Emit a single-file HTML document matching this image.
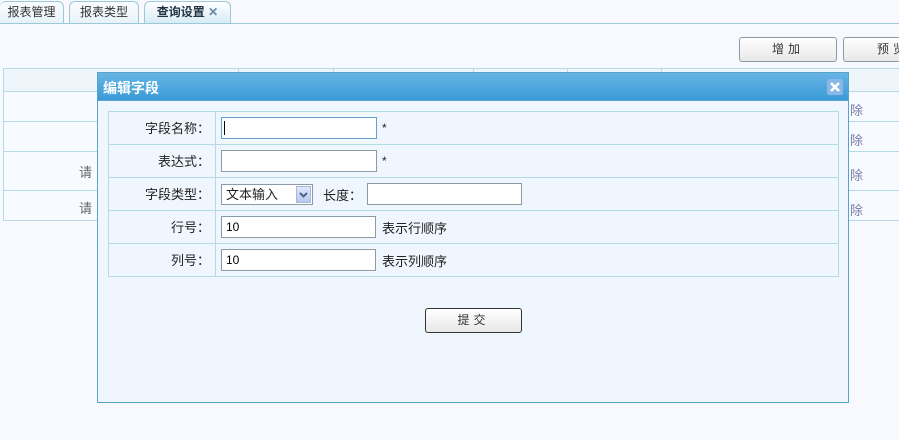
<!DOCTYPE html>
<html><head><meta charset="utf-8"><style>
*{box-sizing:border-box;margin:0;padding:0}
body{width:899px;height:440px;background:#f7f9fe;font-family:"Liberation Sans","Noto Sans CJK SC",sans-serif;font-size:12px;color:#222;position:relative;overflow:hidden}
.a{position:absolute}
.tab{position:absolute;top:1px;height:23px;border:1px solid #9cc8da;border-bottom:none;border-radius:6px 6px 0 0;background:linear-gradient(#fbfdff,#e6f2f8);font-size:12px;color:#333;text-align:center;line-height:21px}
.btn{position:absolute;height:25px;border:1px solid #8a9aa6;border-radius:3px;background:linear-gradient(#fff,#e8e8e8);text-align:center;line-height:23px;font-size:12px;color:#333;letter-spacing:4px}
.hl{position:absolute;height:1px;background:#b4dbe4}
.vl{position:absolute;width:1px;background:#b4dbe4}
input.i{position:absolute;height:22px;border:1px solid #8c9aa6;background:#fff;font-size:12px;padding-left:4px;font-family:"Liberation Sans",sans-serif}
.f{font-size:13px}
</style></head><body>
<div class="tab" style="left:0;width:64px;border-left:none">报表管理</div>
<div class="tab" style="left:69px;width:70px">报表类型</div>
<div class="tab" style="left:144px;width:87px;background:linear-gradient(#fff,#d5ebf6);font-weight:bold;color:#234">查询设置 <span style="color:#6a8aa8">✕</span></div>
<div class="hl" style="left:0;top:23px;width:899px;background:#9cc8da"></div>

<div class="btn" style="left:739px;top:37px;width:98px">增加</div>
<div class="btn" style="left:843px;top:37px;width:80px;text-align:left;padding-left:33px">预览</div>

<div class="a" style="left:3px;top:68px;width:896px;height:153px;border:1px solid #b4dbe4;border-right:none;background:#f7fafe"></div>
<div class="a" style="left:4px;top:69px;width:895px;height:22px;background:#eef6fb"></div>
<div class="hl" style="left:3px;top:91px;width:896px"></div>
<div class="hl" style="left:3px;top:121px;width:896px"></div>
<div class="hl" style="left:3px;top:151px;width:896px"></div>
<div class="hl" style="left:3px;top:190px;width:896px"></div>
<div class="vl" style="left:238px;top:68px;height:4px"></div>
<div class="vl" style="left:333px;top:68px;height:4px"></div>
<div class="vl" style="left:473px;top:68px;height:4px"></div>
<div class="vl" style="left:567px;top:68px;height:4px"></div>
<div class="vl" style="left:661px;top:68px;height:4px"></div>
<div class="a" style="left:79px;top:162px;color:#666;font-size:13px">请</div>
<div class="a" style="left:79px;top:198px;color:#666;font-size:13px">请</div>
<div class="a" style="left:850px;top:100px;color:#7a7aa8;font-size:13px">除</div>
<div class="a" style="left:850px;top:130px;color:#7a7aa8;font-size:13px">除</div>
<div class="a" style="left:850px;top:165px;color:#7a7aa8;font-size:13px">除</div>
<div class="a" style="left:850px;top:200px;color:#7a7aa8;font-size:13px">除</div>

<div class="a" style="left:97px;top:72px;width:752px;height:331px;border:1px solid #5aa3c8;background:#f0f6fd"></div>
<div class="a" style="left:97px;top:72px;width:752px;height:29px;background:linear-gradient(#67b4e4,#3a9bd8);border:1px solid #5aa3c8"></div>
<div class="a" style="left:103px;top:78px;color:#fff;font-weight:bold;font-size:14px">编辑字段</div>
<div class="a" style="left:827px;top:79px;width:16px;height:16px;background:#8ab8e6;border-radius:2px"><svg width="16" height="16"><path d="M4 4L12 12M12 4L4 12" stroke="#fff" stroke-width="2.6"/></svg></div>

<div class="a" style="left:108px;top:111px;width:731px;height:166px;border:1px solid #b4dbe4"></div>
<div class="hl" style="left:108px;top:144px;width:731px"></div>
<div class="hl" style="left:108px;top:177px;width:731px"></div>
<div class="hl" style="left:108px;top:210px;width:731px"></div>
<div class="hl" style="left:108px;top:243px;width:731px"></div>
<div class="vl" style="left:215px;top:111px;height:166px"></div>

<div class="a f" style="left:108px;top:112px;width:102px;height:33px;line-height:33px;text-align:right">字段名称：</div>
<div class="a f" style="left:108px;top:145px;width:102px;height:33px;line-height:33px;text-align:right">表达式：</div>
<div class="a f" style="left:108px;top:178px;width:102px;height:33px;line-height:33px;text-align:right">字段类型：</div>
<div class="a f" style="left:108px;top:211px;width:102px;height:33px;line-height:33px;text-align:right">行号：</div>
<div class="a f" style="left:108px;top:244px;width:102px;height:33px;line-height:33px;text-align:right">列号：</div>

<input class="i" style="left:221px;top:117px;width:156px;border:1px solid #6aa0d0" value="">
<div class="a" style="left:224px;top:121px;width:1px;height:14px;background:#000"></div>
<div class="a" style="left:382px;top:121px">*</div>
<input class="i" style="left:221px;top:150px;width:156px">
<div class="a" style="left:382px;top:154px">*</div>
<div class="a f" style="left:221px;top:184px;width:92px;height:21px;border:1px solid #8c9aa6;background:#fff;padding-left:4px;line-height:19px">文本输入</div>
<div class="a" style="left:296px;top:186px;width:15px;height:17px;background:linear-gradient(#dfe8fb,#b7c9ef);border:1px solid #a8b8dc"><svg width="13" height="15"><path d="M3 6L6.5 9.5L10 6" stroke="#4d6185" stroke-width="2" fill="none"/></svg></div>
<div class="a f" style="left:323px;top:185px">长度：</div>
<input class="i" style="left:367px;top:183px;width:155px">
<input class="i" style="left:221px;top:216px;width:155px" value="10">
<div class="a f" style="left:382px;top:218px">表示行顺序</div>
<input class="i" style="left:221px;top:249px;width:155px" value="10">
<div class="a f" style="left:382px;top:251px">表示列顺序</div>

<div class="btn" style="left:425px;top:308px;width:97px;border-color:#333">提交</div>
</body></html>
